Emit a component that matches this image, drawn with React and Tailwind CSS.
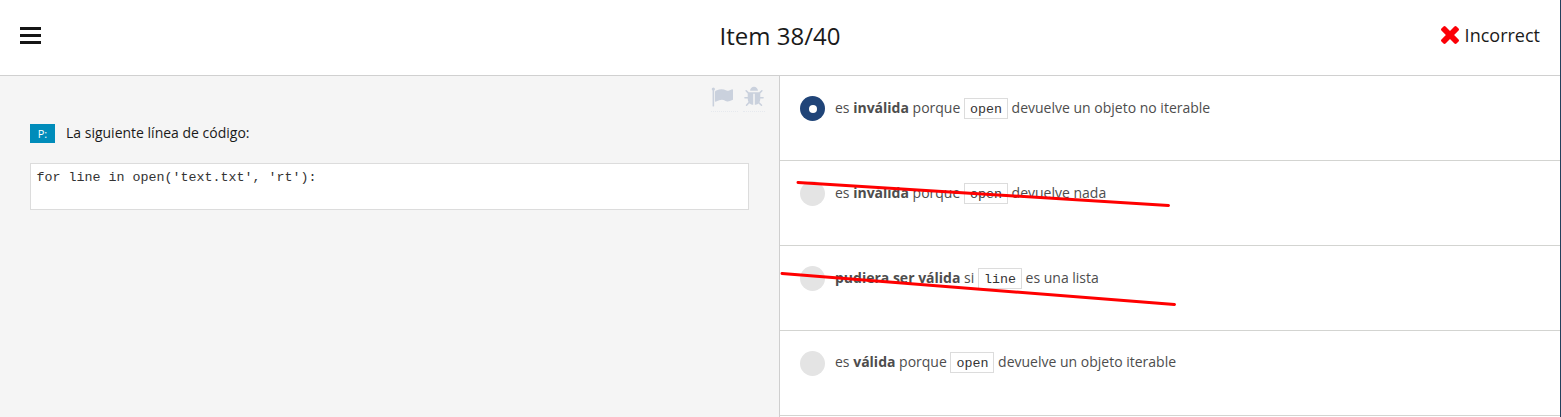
const Code = ({ children }) => (
  <code className="mb-[2px] inline-block h-[21px] border border-[#dcdcdc] bg-white px-[5px] text-center align-middle font-['Liberation_Mono',monospace] text-[13.33px] leading-[22px] text-[#333]">
    {children}
  </code>
);

const Icon = ({ d, className }) => (
  <svg viewBox="0 0 1792 1792" fill="currentColor" className={className}>
    <path d={d} />
  </svg>
);

const FLAG =
  'M320 256q0 72-64 110v1266q0 13-9.5 22.5t-22.5 9.5h-64q-13 0-22.5-9.5t-9.5-22.5v-1266q-64-38-64-110 0-53 37.5-90.5t90.5-37.5 90.5 37.5 37.5 90.5zm1472 64v763q0 25-12.5 38.5t-39.5 27.5q-215 116-369 116-61 0-123.5-22t-108.5-48-115.5-48-142.5-22q-192 0-464 146-17 9-33 9-26 0-45-19t-19-45v-742q0-32 31-55 21-14 79-43 236-120 421-120 107 0 200 29t219 88q38 19 88 19 54 0 117.5-21t110-47 88-47 54.5-21q26 0 45 19t19 45z';
const BUG =
  'M1696 960q0 26-19 45t-45 19h-224q0 171-67 290l208 209q19 19 19 45t-19 45q-18 19-45 19t-45-19l-198-197q-5 5-15 13t-42 28.5-65 36.5-82 29-97 13v-896h-128v896q-51 0-101.5-13.5t-87-33-66-39-43.5-32.5l-15-14-183 207q-20 21-48 21-24 0-43-16-19-18-20.5-44.5t15.5-46.5l202-227q-58-114-58-274h-224q-26 0-45-19t-19-45 19-45 45-19h224v-294l-173-173q-19-19-19-45t19-45 45-19 45 19l173 173h844l173-173q19-19 45-19t45 19 19 45-19 45l-173 173v294h224q26 0 45 19t19 45zm-480-576h-640q0-133 93.5-226.5t226.5-93.5 226.5 93.5 93.5 226.5z';
const TIMES =
  'M1490 1322q0 40-28 68l-136 136q-28 28-68 28t-68-28l-294-294-294 294q-28 28-68 28t-68-28l-136-136q-28-28-28-68t28-68l294-294-294-294q-28-28-28-68t28-68l136-136q28-28 68-28t68 28l294 294 294-294q28-28 68-28t68 28l136 136q28 28 28 68t-28 68l-294 294 294 294q28 28 28 68z';

const Option = ({ selected, textClass = '', children }) => (
  <li className="flex h-[85px] items-start border-b border-[#d3d4d1] pl-5 pt-5">
    <span
      className={
        selected
          ? 'flex size-[25px] items-center justify-center rounded-full bg-[#204478]'
          : 'flex size-[25px] rounded-full bg-[#e4e4e4]'
      }
    >
      {selected && <span className="size-2 rounded-full bg-white" />}
    </span>
    <p className={'ml-[10px] whitespace-nowrap leading-[24px] ' + textClass}>{children}</p>
  </li>
);

export default function App() {
  return (
    <div className="relative flex h-[417px] w-[1561px] flex-col overflow-hidden border-r border-[#23405c] bg-white font-['Open_Sans',sans-serif] text-sm text-[#1a1a1a]">
      <header className="grid h-[76px] shrink-0 grid-cols-3 items-center border-b border-[#d0d0d0] px-5 pb-1">
        <button aria-label="Menu" className="flex w-[21px] flex-col gap-1">
          <span className="h-[3px] bg-[#151515]" />
          <span className="h-[3px] bg-[#151515]" />
          <span className="h-[3px] bg-[#151515]" />
        </button>
        <h1 className="text-center text-2xl">Item 38/40</h1>
        <div className="flex items-center justify-end pb-[2px] text-lg">
          <svg viewBox="302 366 1188 1188" className="mr-[6px] size-[18px] overflow-visible text-[#fb0007]">
            <path d={TIMES} fill="currentColor" />
          </svg>
          Incorrect
        </div>
      </header>
      <main className="flex min-h-0 flex-1">
        <section className="w-[780px] shrink-0 border-r border-[#cfcfcf] bg-[#f5f5f5] pl-[30px] pr-[30px]">
          <div className="-mr-[16px] flex h-[36px] items-end justify-end gap-[5px] text-[#cad1dd]">
            <span className="flex w-[27px] border-b border-dotted border-[#e6e9ee] pb-[3px]">
              <Icon d={FLAG} className="size-[22px]" />
            </span>
            <span className="flex border-b border-dotted border-[#e6e9ee] pb-[3px]">
              <Icon d={BUG} className="size-[22px]" />
            </span>
          </div>
          <div className="mt-[12px] flex h-[19px] items-start">
            <span className="flex h-[19px] w-[25px] items-center justify-center bg-[#008cba] text-[11px] text-white">
              P:
            </span>
            <p className="ml-[11px] leading-[17px]">La siguiente línea de código:</p>
          </div>
          <pre className="mt-[20px] h-[47px] w-[719px] border border-[#dcdcdc] bg-white px-[5.5px] pt-[5px] font-['Liberation_Mono',monospace] text-[13.33px] leading-[18px] text-[#333]">
            {"for line in open('text.txt', 'rt'):"}
          </pre>
        </section>
        <ul className="flex-1 text-[#4d4d4d]">
          <Option selected>
            es <b>inválida</b> porque <Code>open</Code> devuelve un objeto no iterable
          </Option>
          <Option>
            es <b>inválida</b> porque <Code>open</Code> devuelve nada
          </Option>
          <Option>
            <b>pudiera ser válida</b> si <Code>line</Code> es una lista
          </Option>
          <Option textClass="-mt-px">
            es <b>válida</b> porque <Code>open</Code> devuelve un objeto iterable
          </Option>
        </ul>
      </main>
      <svg
        viewBox="780 170 400 150"
        className="pointer-events-none absolute left-[780px] top-[170px] h-[150px] w-[400px]"
        stroke="#ff0000"
        strokeWidth="3"
        strokeLinecap="round"
      >
        <path d="M798 182.5L1168.500 205.500" />
        <path d="M782 273.500L1174.500 304.500" />
      </svg>
    </div>
  );
}
